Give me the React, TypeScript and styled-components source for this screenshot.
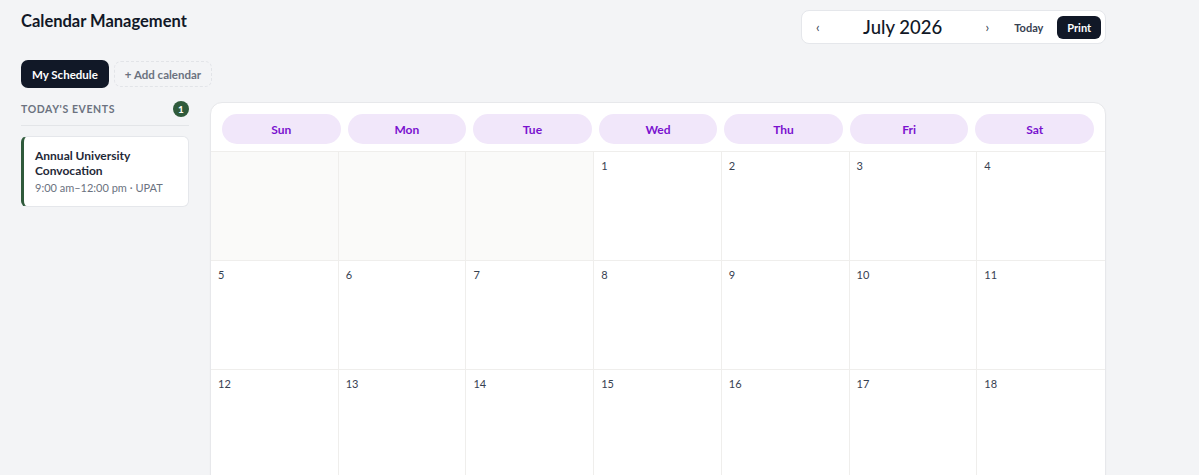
import styled, { createGlobalStyle } from "styled-components";

const GlobalStyle = createGlobalStyle`
  * {
    box-sizing: border-box;
  }

  body {
    margin: 0;
    background: #f3f4f6;
    font-family: Lato, "Noto Sans", "Liberation Sans", sans-serif;
    color: #111827;
  }
`;

const DAYS = ["Sun", "Mon", "Tue", "Wed", "Thu", "Fri", "Sat"];

// July 2026 starts on a Wednesday
const buildCells = () => {
  const cells: (number | null)[] = [null, null, null];
  for (let d = 1; d <= 31; d++) cells.push(d);
  while (cells.length % 7 !== 0) cells.push(null);
  return cells;
};

const App = () => {
  const cells = buildCells();

  return (
    <Page>
      <GlobalStyle />
      <Sidebar>
        <Title>Calendar Management</Title>

        <Tabs>
          <Tab active>My Schedule</Tab>
          <AddTab>+ Add calendar</AddTab>
        </Tabs>

        <EventsHeader>
          <EventsLabel>Today's Events</EventsLabel>
          <Badge>1</Badge>
        </EventsHeader>

        <EventCard>
          <EventTitle>Annual University Convocation</EventTitle>
          <EventMeta>9:00 am–12:00 pm · UPAT</EventMeta>
        </EventCard>
      </Sidebar>

      <Main>
        <Toolbar>
          <Nav>
            <Arrow>‹</Arrow>
            <Month>July 2026</Month>
            <Arrow>›</Arrow>
            <TodayButton>Today</TodayButton>
            <PrintButton>Print</PrintButton>
          </Nav>
        </Toolbar>

        <Calendar>
          <WeekHeader>
            {DAYS.map((d) => (
              <DayPill key={d}>{d}</DayPill>
            ))}
          </WeekHeader>
          <Grid>
            {cells.map((day, i) => (
              <Cell key={i} empty={day === null}>
                {day && <DayNumber>{day}</DayNumber>}
              </Cell>
            ))}
          </Grid>
        </Calendar>
      </Main>
    </Page>
  );
};

const Page = styled.div`
  display: flex;
  gap: 21px;
  height: 100vh;
  overflow: hidden;
  padding: 10px 93px 0 21px;
`;

const Sidebar = styled.aside`
  width: 168px;
  flex-shrink: 0;
  display: flex;
  flex-direction: column;
`;

const Title = styled.h1`
  margin: 0;
  height: 24px;
  font-size: 16.5px;
  font-weight: 700;
  line-height: 22px;
  white-space: nowrap;
  color: #111827;
`;

const Tabs = styled.div`
  display: flex;
  gap: 5px;
  margin-top: 26px;
`;

const Tab = styled.button<{ active?: boolean }>`
  height: 28px;
  padding: 0 11px;
  border: none;
  border-radius: 7px;
  background: ${(p) => (p.active ? "#111827" : "transparent")};
  color: ${(p) => (p.active ? "#ffffff" : "#6b7280")};
  font-family: inherit;
  font-size: 11.5px;
  font-weight: 700;
  white-space: nowrap;
`;

const AddTab = styled.button`
  height: 26px;
  margin-top: 1px;
  padding: 0 10px;
  border: 1px dashed #e2e4e8;
  border-radius: 7px;
  background: transparent;
  color: #6b7280;
  font-family: inherit;
  font-size: 11.5px;
  font-weight: 700;
  white-space: nowrap;
`;

const EventsHeader = styled.div`
  display: flex;
  align-items: center;
  justify-content: space-between;
  margin-top: 13px;
  padding-bottom: 8px;
  border-bottom: 1px solid #e3e5e8;
`;

const EventsLabel = styled.span`
  font-size: 10.5px;
  font-weight: 700;
  letter-spacing: 0.6px;
  text-transform: uppercase;
  color: #6b7280;
`;

const Badge = styled.span`
  width: 16px;
  height: 16px;
  border-radius: 50%;
  background: #2f5a3b;
  color: #ffffff;
  font-size: 10px;
  font-weight: 700;
  display: flex;
  align-items: center;
  justify-content: center;
`;

const EventCard = styled.div`
  margin-top: 10px;
  padding: 11px 12px 11px 11px;
  background: #ffffff;
  border: 1px solid #e5e7eb;
  border-left: 3px solid #2f5a3b;
  border-radius: 6px;
`;

const EventTitle = styled.div`
  font-size: 12px;
  font-weight: 700;
  line-height: 15px;
  color: #1f2937;
`;

const EventMeta = styled.div`
  margin-top: 2px;
  font-size: 11px;
  line-height: 15px;
  color: #6b7280;
`;

const Main = styled.main`
  flex: 1;
  display: flex;
  flex-direction: column;
`;

const Toolbar = styled.div`
  display: flex;
  justify-content: flex-end;
`;

const Nav = styled.div`
  display: flex;
  align-items: center;
  width: 305px;
  height: 34px;
  padding: 0 4px;
  background: #ffffff;
  border: 1px solid #e5e7eb;
  border-radius: 8px;
`;

const Arrow = styled.button`
  width: 24px;
  height: 24px;
  padding: 0;
  border: none;
  background: transparent;
  color: #374151;
  font-family: inherit;
  font-size: 13px;
  line-height: 1;
`;

const Month = styled.div`
  width: 147px;
  text-align: center;
  font-size: 18.5px;
  font-weight: 500;
  color: #111827;
`;

const TodayButton = styled.button`
  height: 23px;
  margin-left: 5px;
  padding: 0 10px;
  border: none;
  background: transparent;
  color: #374151;
  font-family: inherit;
  font-size: 11px;
  font-weight: 700;
`;

const PrintButton = styled.button`
  height: 23px;
  width: 44px;
  margin-left: 4px;
  padding: 0;
  border: none;
  border-radius: 6px;
  background: #111827;
  color: #ffffff;
  font-family: inherit;
  font-size: 11px;
  font-weight: 700;
`;

const Calendar = styled.section`
  margin-top: 58px;
  flex-shrink: 0;
  background: #ffffff;
  border: 1px solid #e7e8eb;
  border-radius: 12px;
  overflow: hidden;
  box-shadow: 0 1px 2px rgba(0, 0, 0, 0.03);
`;

const WeekHeader = styled.div`
  display: grid;
  grid-template-columns: repeat(7, 1fr);
  gap: 7px;
  padding: 11px 11px 7px;
  border-bottom: 1px solid #efeeec;
`;

const DayPill = styled.div`
  height: 30px;
  border-radius: 15px;
  background: #f1e7fa;
  color: #7a12cf;
  font-size: 12px;
  font-weight: 700;
  display: flex;
  align-items: center;
  justify-content: center;
`;

const Grid = styled.div`
  display: grid;
  grid-template-columns: repeat(7, 1fr);
`;

const Cell = styled.div<{ empty?: boolean }>`
  height: 109px;
  padding: 5px 7px;
  line-height: 14px;
  background: ${(p) => (p.empty ? "#fafaf9" : "#ffffff")};
  border-right: 1px solid #efeeec;
  border-bottom: 1px solid #efeeec;

  &:nth-child(7n) {
    border-right: none;
  }
`;

const DayNumber = styled.span`
  font-size: 11px;
  color: #374151;
`;

export default App;
